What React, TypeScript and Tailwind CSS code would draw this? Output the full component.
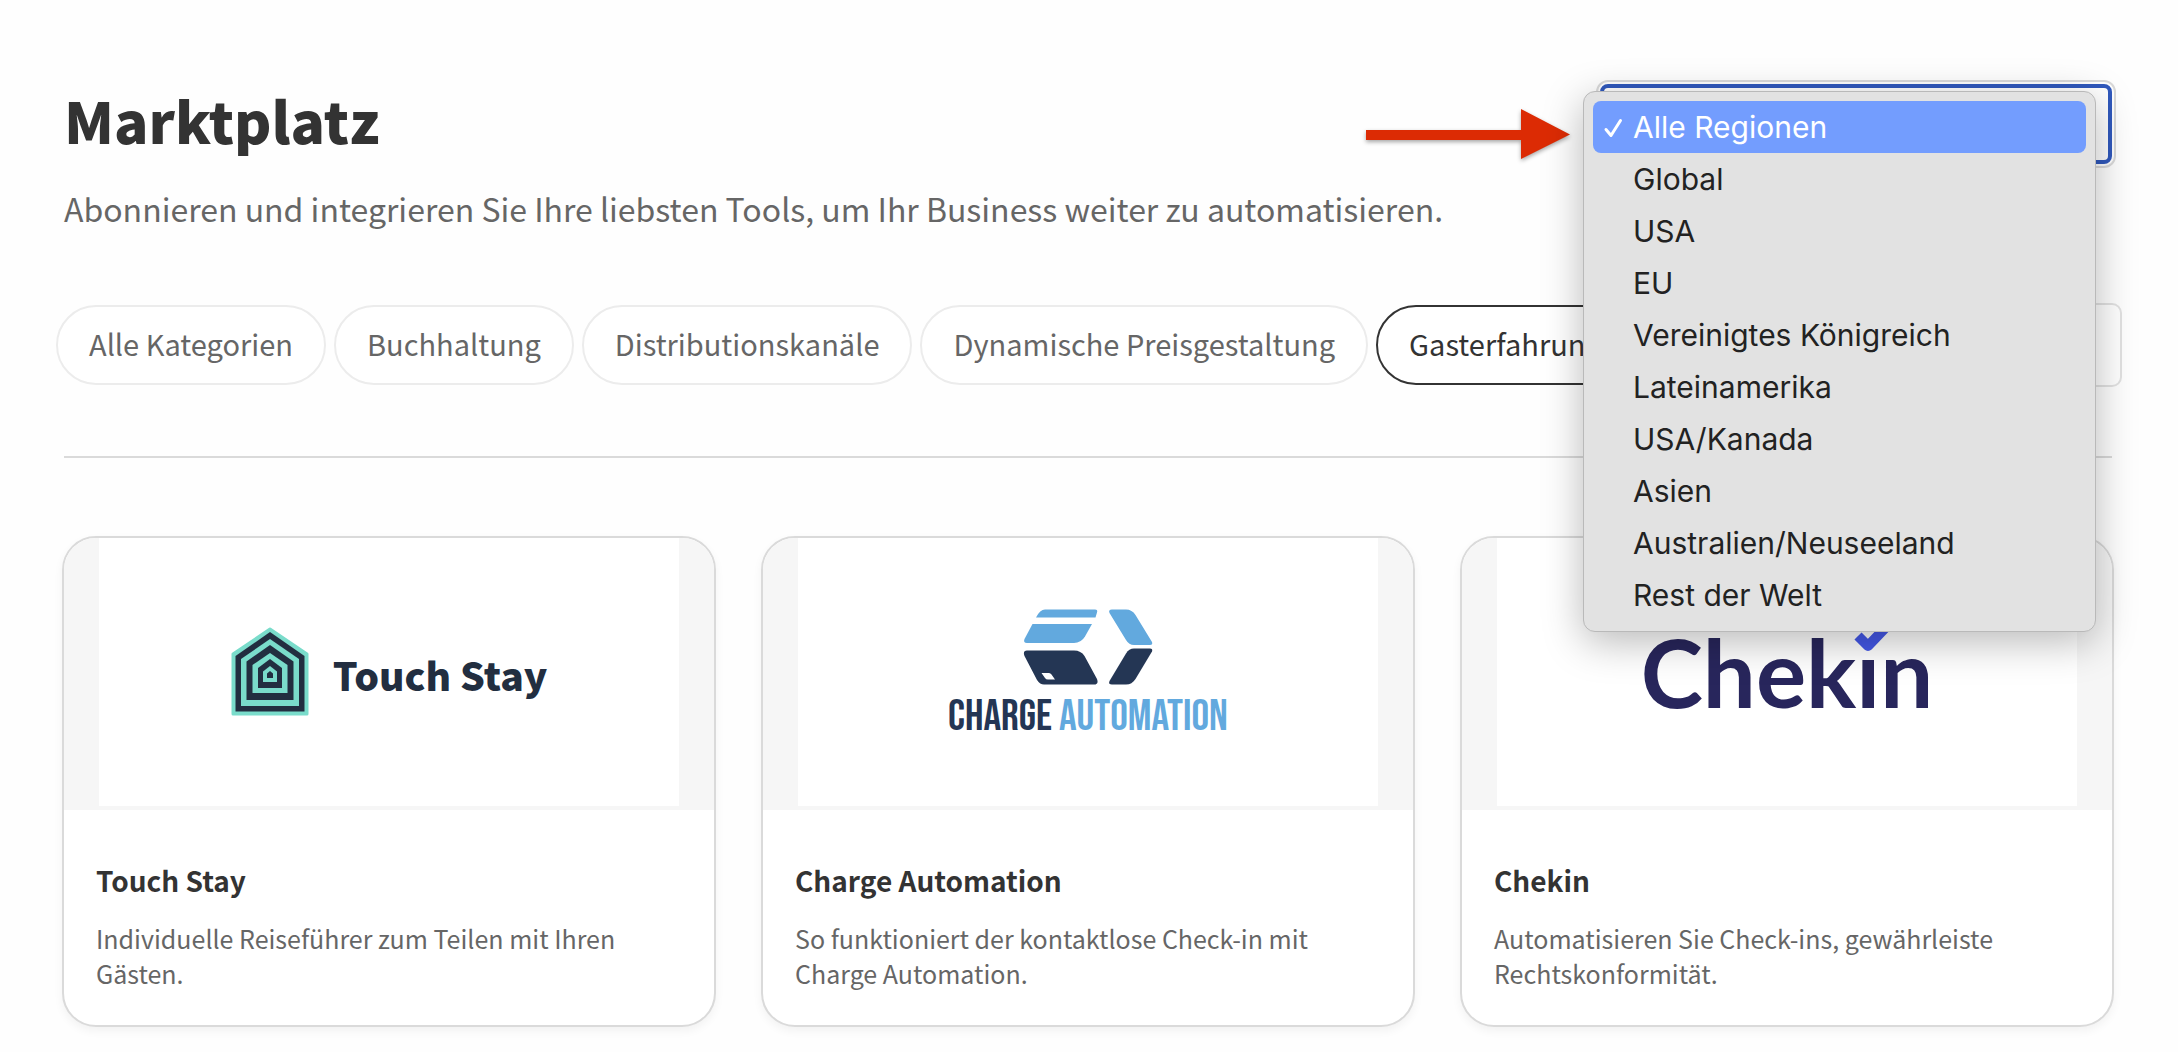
import clsx from 'clsx';
import React from 'react';

interface Integration {
  name: string;
  description: string;
  logo: React.ReactNode;
}

const REGIONS = [
  'Alle Regionen',
  'Global',
  'USA',
  'EU',
  'Vereinigtes Königreich',
  'Lateinamerika',
  'USA/Kanada',
  'Asien',
  'Australien/Neuseeland',
  'Rest der Welt',
] as const;

const CATEGORIES = [
  'Alle Kategorien',
  'Buchhaltung',
  'Distributionskanäle',
  'Dynamische Preisgestaltung',
  'Gasterfahrung',
] as const;

const ACTIVE_CATEGORY = 'Gasterfahrung';
const ACTIVE_REGION = 'Alle Regionen';

// Logos
const TouchStayLogo: React.FC = () => (
  <div className="flex items-center gap-6">
    <svg width="78" height="90" viewBox="0 0 78 90" aria-hidden="true">
      <path d="M39 2 76 27V87H2V27Z" fill="#7adccb" stroke="#7adccb" strokeWidth="3" strokeLinejoin="round" />
      <path d="M39 5 73.500 29V84.500H4.500V29Z" fill="#222e40" />
      <path d="M39 12 68 32V79H10V32Z" fill="#7adccb" />
      <path d="M39 18 62.500 34.500V73H15.500V34.500Z" fill="#222e40" />
      <path d="M39 26 56.500 38V66H21.500V38Z" fill="#7adccb" />
      <path d="M39 32 51 41V61H27V41Z" fill="#222e40" />
      <path d="M39 39 46 44.500V55H32V44.500Z" fill="#7adccb" />
      <path d="M39 44 42 46.500V51H36V46.500Z" fill="#222e40" />
    </svg>
    <span className="pt-1 font-['Noto_Sans_CJK_SC',sans-serif] text-[39px] leading-[48px] font-black text-[#222e40]">
      Touch Stay
    </span>
  </div>
);

const ChargeAutomationLogo: React.FC = () => (
  <div className="flex flex-col items-center gap-2.5 pt-1">
    <svg width="130" height="76" viewBox="0 0 130 76" aria-hidden="true">
      <g fill="#62a9de">
        <path d="M22 .5H72Q75 .5 74 3.500L72.500 8.500H13Q17 .5 22 .5Z" />
        <path d="M9.500 15H69L62 27.500Q58 34 51 34H4Q0 34 1.500 30Z" />
        <path d="M89 .5H103Q109 .5 112.500 6L129 33Q130 36 127 36H111Q106 36 103 31L86.500 4Q85 .5 89 .5Z" />
      </g>
      <g fill="#243654">
        <path
          fillRule="evenodd"
          d="M4 41.500H51Q58 41.500 61.500 47L74 70Q76 75.500 71 75.500H21Q17 75.500 14 71L1.500 47Q-.5 41.500 4 41.500ZM18.500 64 22 69Q23 70.500 25 70.500H32L28.500 65.500Q27.500 64 26 64Z"
        />
        <path d="M111 39.500H127Q130 39.500 129 42.500L112.500 70Q109 75.500 103 75.500H89Q85 75.500 86.500 72L103 44.500Q106 39.500 111 39.500Z" />
      </g>
    </svg>
    <span className="font-['Bebas_Neue','Roboto_Condensed','Liberation_Sans_Narrow','Open_Sans_Condensed',sans-serif] text-[44px] leading-[44px] whitespace-nowrap text-[#243654]">
      CHARGE <span className="text-[#62a9de]">AUTOMATION</span>
    </span>
  </div>
);

const ChekinLogo: React.FC = () => (
  <div className="relative">
    <span className="font-[Lato,sans-serif] text-[94px] leading-[100px] font-bold text-[#28265c]">Chekın</span>
    <svg className="absolute top-0 right-9" width="48" height="32" viewBox="0 0 48 32" aria-hidden="true">
      <path d="M9 14 19 24 40 2" fill="none" stroke="#4458e8" strokeWidth="10" strokeLinejoin="round" />
    </svg>
  </div>
);

const INTEGRATIONS: Integration[] = [
  {
    name: 'Touch Stay',
    description: 'Individuelle Reiseführer zum Teilen mit Ihren Gästen.',
    logo: <TouchStayLogo />,
  },
  {
    name: 'Charge Automation',
    description: 'So funktioniert der kontaktlose Check-in mit Charge Automation.',
    logo: <ChargeAutomationLogo />,
  },
  {
    name: 'Chekin',
    description: 'Automatisieren Sie Check-ins, gewährleiste Rechtskonformität.',
    logo: <ChekinLogo />,
  },
];

const Arrow: React.FC = () => (
  <svg
    className="absolute top-[26px] right-full mr-6 drop-shadow-[0_2px_2px_rgba(0,0,0,0.35)]"
    width="206"
    height="56"
    viewBox="0 0 206 56"
    aria-hidden="true"
  >
    <path d="M0 24H155V3L204 28.500 155 53V34H0Z" fill="#dc2b04" />
  </svg>
);

// Region menu, opened over the select
const RegionMenu: React.FC = () => (
  <ul
    role="listbox"
    aria-label="Region"
    className="absolute top-[11px] right-5 z-10 w-[513px] rounded-xl border border-[#b9b9b9] bg-[#e2e2e2] p-[9px] pb-[10px] font-[Inter,sans-serif] text-[30px] leading-[52px] text-[#222] shadow-[0_10px_40px_rgba(0,0,0,0.28)]"
  >
    {REGIONS.map((region) => {
      const selected = region === ACTIVE_REGION;
      return (
        <li
          key={region}
          role="option"
          aria-selected={selected}
          className={clsx('flex items-center rounded-lg pl-2', selected && 'bg-[#739dfe] text-white')}
        >
          <span className="w-8 shrink-0">
            {selected && (
              <svg width="24" height="24" viewBox="0 0 24 24" aria-hidden="true">
                <path d="M5 14.500 10 20.500 19.500 5.500" fill="none" stroke="white" strokeWidth="3" strokeLinecap="round" strokeLinejoin="round" />
              </svg>
            )}
          </span>
          {region}
        </li>
      );
    })}
  </ul>
);

const IntegrationCard: React.FC<{ integration: Integration }> = ({ integration }) => (
  <article className="overflow-hidden rounded-[34px] border-2 border-[#dadada] bg-white shadow-[0_4px_10px_rgba(0,0,0,0.05)]">
    <div className="bg-[#f6f6f6] px-[35px] pb-1">
      <div className="flex h-[268px] items-center justify-center bg-white">{integration.logo}</div>
    </div>
    <div className="px-8 pt-12 pb-[34px]">
      <h2 className="text-[28px] leading-[44px] font-bold text-[#333]">{integration.name}</h2>
      <p className="mt-[19px] text-[25px] leading-[35px] text-[#666]">{integration.description}</p>
    </div>
  </article>
);

const App: React.FC = () => (
  <main className="min-h-screen bg-[#fefefe] pt-20 pr-[66px] pb-5 pl-16 font-['Noto_Sans_CJK_SC',sans-serif]">
    <header className="-mr-1 flex items-start justify-between">
      <div>
        <h1 className="text-[57px] leading-[78px] font-black text-[#333]">Marktplatz</h1>
        <p className="mt-6 text-[32px] leading-[52px] text-[#666]">
          Abonnieren und integrieren Sie Ihre liebsten Tools, um Ihr Business weiter zu automatisieren.
        </p>
      </div>
      <div className="relative">
        <Arrow />
        <select
          aria-label="Region"
          defaultValue={ACTIVE_REGION}
          className="block h-[88px] w-[520px] appearance-none rounded-xl border-2 border-[#dadada] bg-white px-8 text-[29px] text-[#666] outline-4 -outline-offset-8 outline-[#3059bd]"
        >
          {REGIONS.map((region) => (
            <option key={region}>{region}</option>
          ))}
        </select>
        <RegionMenu />
      </div>
    </header>

    <nav aria-label="Kategorien" className="-mr-2.5 -ml-2 mt-[69px] flex items-center gap-2">
      {CATEGORIES.map((category) => (
        <button
          key={category}
          type="button"
          className={clsx(
            'h-20 shrink-0 rounded-full border-2 bg-white px-[31px] pb-0.5 text-[29px] whitespace-nowrap',
            category === ACTIVE_CATEGORY ? 'border-[#333] text-[#333]' : 'border-[#ececec] text-[#666]',
          )}
        >
          {category}
        </button>
      ))}
      <select
        aria-label="Weitere Kategorien"
        className="ml-auto h-[84px] w-[400px] appearance-none rounded-[10px] border-2 border-[#e2e2e2] bg-white"
      />
    </nav>

    <hr className="mt-[69px] border-t-2 border-[#dadada]" />

    <section className="-mx-0.5 mt-[78px] grid grid-cols-3 gap-[45px]">
      {INTEGRATIONS.map((integration) => (
        <IntegrationCard key={integration.name} integration={integration} />
      ))}
    </section>
  </main>
);

export default App;
